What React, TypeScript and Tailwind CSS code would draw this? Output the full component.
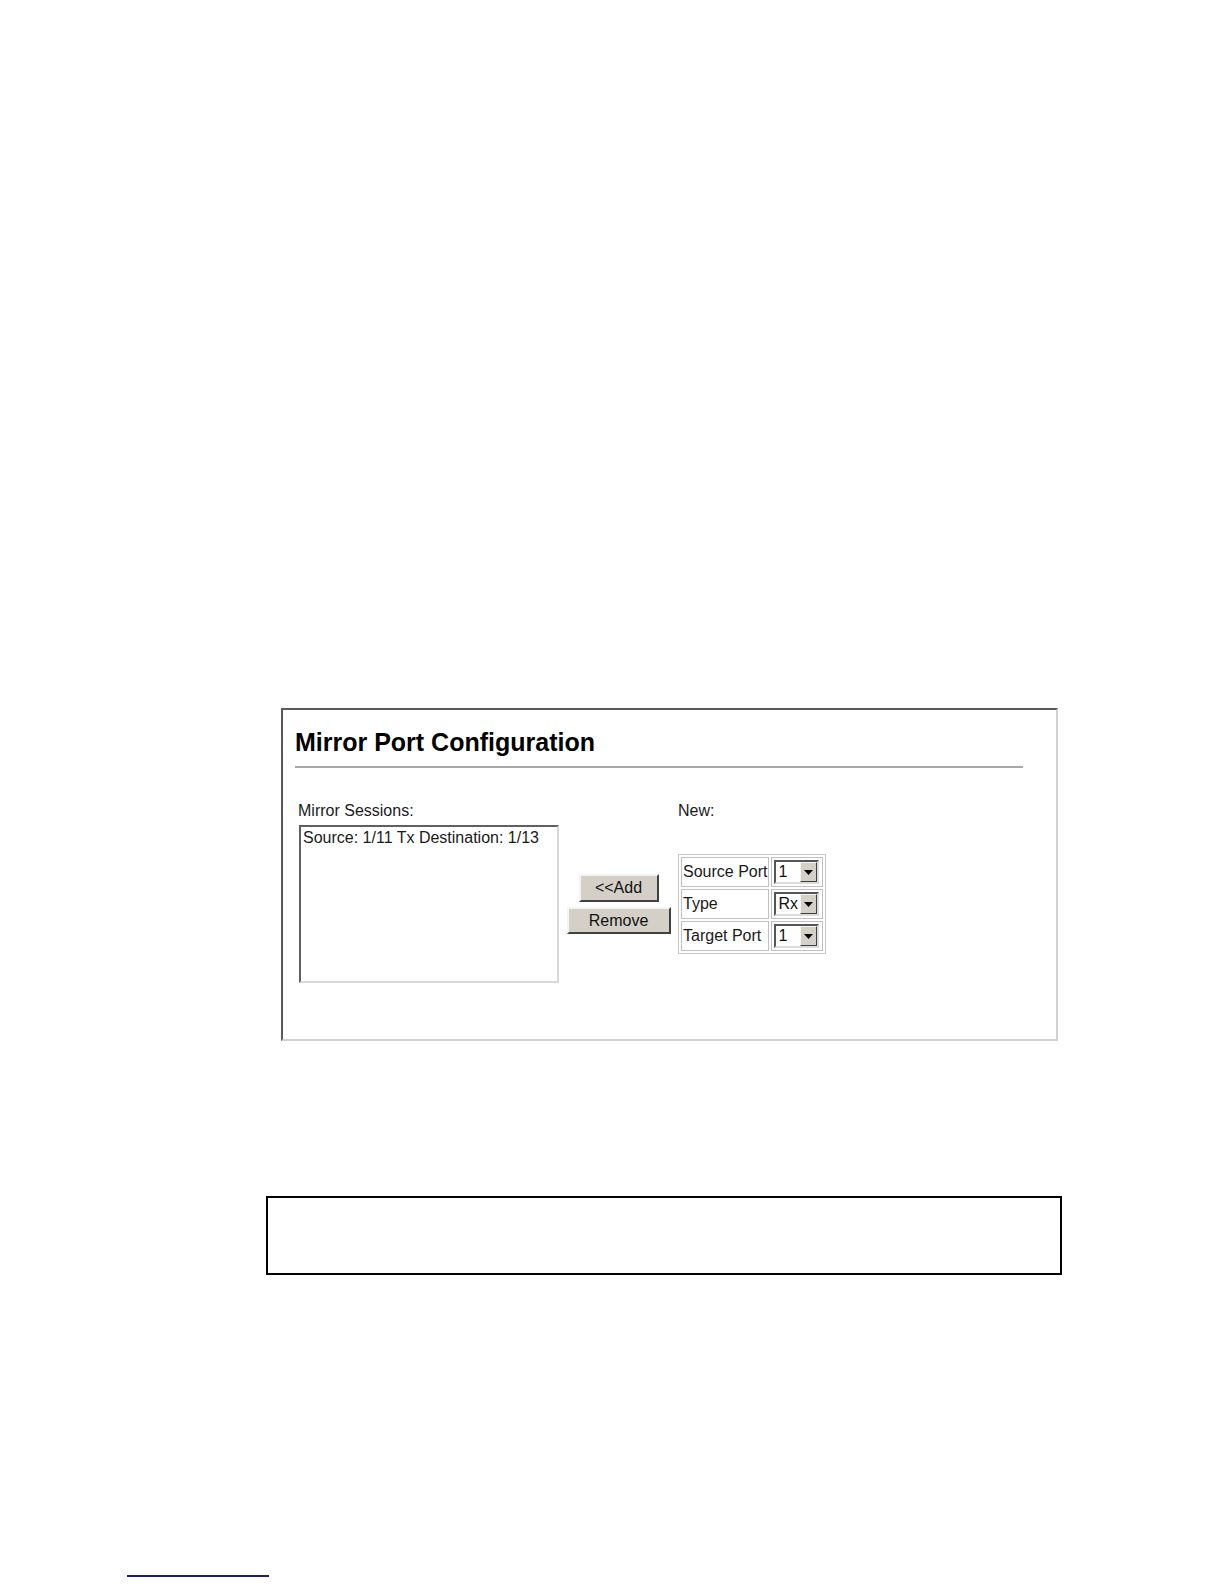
import React from 'react';

const font = { fontFamily: '"Liberation Sans", Arial, sans-serif' };

function DropSelect({ value }: { value: string }) {
  return (
    <div className="flex w-[45px] h-[24px] bg-white border-2 border-t-[#555] border-l-[#555] border-r-[#dcdcdc] border-b-[#dcdcdc]">
      <span className="flex-1 pl-[2px] text-[16px] leading-[20px] text-[#111]">{value}</span>
      <span className="w-[17px] h-full flex items-center justify-center bg-[#d4d0c8] border border-t-[#f4f4f4] border-l-[#f4f4f4] border-r-[#404040] border-b-[#404040]">
        <svg width="9" height="5" viewBox="0 0 9 5">
          <path d="M0 0 H9 L4.5 5 Z" fill="#000" />
        </svg>
      </span>
    </div>
  );
}

function Button({ label, width, height }: { label: string; width: string; height: string }) {
  return (
    <button
      className={`${width} ${height} flex items-center justify-center bg-[#d4d0c8] text-[16px] text-[#111] border-2 border-t-[#f4f4f4] border-l-[#f4f4f4] border-r-[#404040] border-b-[#404040]`}
    >
      {label}
    </button>
  );
}

const rows = [
  { name: 'Source Port', value: '1' },
  { name: 'Type', value: 'Rx' },
  { name: 'Target Port', value: '1' },
];

export default function App() {
  return (
    <div className="w-full h-[1584px] bg-white overflow-hidden" style={font}>
      {/* screenshot panel */}
      <div className="pt-[708px] pl-[281px]">
        <div className="w-[777px] border-2 border-t-[#5a5a5a] border-l-[#5a5a5a] border-r-[#d0d0d0] border-b-[#d0d0d0] bg-white">
          <div className="pl-3 pt-[18px] pb-[56px]">
            <h1 className="text-[25px] leading-[29px] font-bold text-black">Mirror Port Configuration</h1>
            <div className="mt-[9px] w-[728px] h-[2px] bg-[#a8a8a8]" />

            <div className="ml-[4px] mt-[34px] grid grid-cols-[260px_119px_auto] gap-y-[5px] items-center text-[16px] text-[#1a1a1a]">
              <div className="-ml-px leading-[18px]">Mirror Sessions:</div>
              <div />
              <div className="leading-[18px]">New:</div>

              <div className="w-[260px] h-[158px] bg-white border-2 border-t-[#606060] border-l-[#606060] border-r-[#d8d8d8] border-b-[#d8d8d8] pl-[2px] pt-[2px] leading-[18px]">
                Source: 1/11 Tx Destination: 1/13
              </div>

              <div className="flex flex-col items-center gap-[5px]">
                <Button label="<<Add" width="w-[80px]" height="h-[28px]" />
                <Button label="Remove" width="w-[104px]" height="h-[27px]" />
              </div>

              <table className="border-separate border-spacing-[2px] border border-[#c8c8c8] w-[148px]">
                <tbody>
                  {rows.map((r) => (
                    <tr key={r.name} className="h-[30px]">
                      <td className="w-[86px] border border-[#c0c0c0] px-[1px] leading-[18px] whitespace-nowrap">{r.name}</td>
                      <td className="border border-[#c0c0c0] pl-[2px]">
                        <DropSelect value={r.value} />
                      </td>
                    </tr>
                  ))}
                </tbody>
              </table>
            </div>
          </div>
        </div>
      </div>

      {/* empty boxed note */}
      <div className="mt-[155px] ml-[266px] w-[796px] h-[79px] border-2 border-black" />

      {/* footnote rule */}
      <div className="mt-[300px] ml-[127px] w-[142px] h-[2px] bg-[#1a1a8c]" />
    </div>
  );
}
